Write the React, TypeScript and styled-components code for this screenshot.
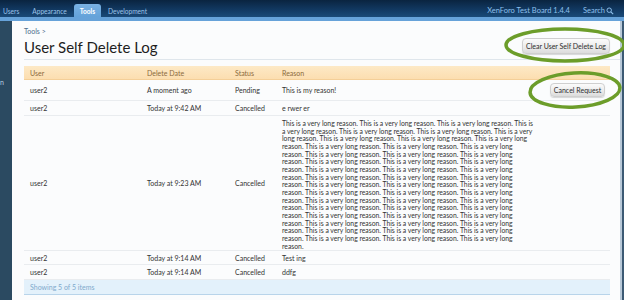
import React from "react";
import styled, { createGlobalStyle } from "styled-components";

const GlobalStyle = createGlobalStyle`
  html, body { margin: 0; padding: 0; background: #0d2a47; }
  body { font-family: Lato, "Open Sans", "DejaVu Sans", sans-serif; }
  * { box-sizing: border-box; }
`;

const Page = styled.div`
  position: relative;
  width: 624px;
  height: 300px;
  overflow: hidden;
  display: flex;
  flex-direction: column;
  background: #0d2a47;
`;

const TopBar = styled.div`
  height: 17px;
  display: flex;
  align-items: flex-end;
  justify-content: space-between;
  background: linear-gradient(180deg, #0a2440 0%, #123a63 60%, #1a4a78 100%);
  padding: 0 10px 0 0;
`;

const Tabs = styled.div`
  display: flex;
  align-items: flex-end;
  height: 100%;
`;

const Tab = styled.div<{ $active?: boolean; $first?: boolean }>`
  height: 13px;
  padding: ${(p) => (p.$first ? "0 6px 0 3px" : "0 6px")};
  margin-right: 1px;
  display: flex;
  align-items: center;
  font-size: 6.6px;
  color: ${(p) => (p.$active ? "#ffffff" : "#9cc4ea")};
  font-weight: ${(p) => (p.$active ? 700 : 400)};
  background: ${(p) => (p.$active ? "linear-gradient(180deg,#7ab2e4,#64a2d9)" : "transparent")};
  border-radius: ${(p) => (p.$active ? "3px 3px 0 0" : "0")};
`;

const RightLinks = styled.div`
  display: flex;
  align-items: center;
  gap: 13px;
  height: 13px;
  font-size: 7.5px;
  color: #8fc0ec;
`;

const SearchLink = styled.span`
  display: flex;
  align-items: center;
  gap: 1px;
`;

const Strip = styled.div`
  height: 4px;
  background: #66a2d9;
`;

const Body = styled.div`
  flex: 1;
  display: flex;
  min-height: 0;
`;

const Sidebar = styled.div`
  width: 12px;
  background: #2b4a61;
  padding-top: 57px;
  font-size: 7px;
  color: #b8cde0;
  overflow: hidden;
`;

const SideItem = styled.div`
  line-height: 8px;
`;

const Content = styled.div`
  flex: 1;
  background: #fbfcfd;
  border-right: 2px solid #b9c9d8;
  padding: 6px 10px 0 12px;
  display: flex;
  flex-direction: column;
`;

const Gutter = styled.div`
  width: 2px;
  background: #3c5a74;
`;

const Breadcrumb = styled.div`
  font-size: 7px;
  color: #4d6d8c;
  line-height: 9px;
`;

const TitleRow = styled.div`
  display: flex;
  align-items: flex-start;
  justify-content: space-between;
  border-bottom: 1px solid #dfe6ec;
  margin-right: -10px;
  padding-right: 10px;
  height: 24px;
`;

const Title = styled.h1`
  margin: 0;
  padding-top: 2px;
  font-size: 15px;
  line-height: 18px;
  font-weight: 400;
  color: #1e1e1e;
`;

const Button = styled.button<{ $h: number; $w: number; $mt?: number }>`
  height: ${(p) => p.$h}px;
  width: ${(p) => p.$w}px;
  margin-top: ${(p) => p.$mt ?? 0}px;
  padding: 0;
  font-family: inherit;
  font-size: 7px;
  color: #2e2e2e;
  background: linear-gradient(180deg, #fbfbfb 0%, #ececec 55%, #dcdcdc 100%);
  border: 1px solid #cfcfcf;
  border-radius: 4px;
  box-shadow: 0 1px 1px rgba(0, 0, 0, 0.15);
  white-space: nowrap;
`;

const Table = styled.div`
  margin-top: 6px;
  display: grid;
  grid-template-columns: 117px 88px 47px 1fr auto;
`;

const HeaderCell = styled.div`
  height: 14px;
  display: flex;
  align-items: center;
  padding-left: 6px;
  font-size: 7px;
  color: #8b6a3d;
  background: linear-gradient(180deg, #fde9c6, #fcdeb0);
  border-bottom: 1px solid #f4cf98;
`;

const Cell = styled.div<{ $h: number; $top?: boolean }>`
  min-height: ${(p) => p.$h}px;
  display: flex;
  align-items: ${(p) => (p.$top ? "flex-start" : "center")};
  padding: ${(p) => (p.$top ? "4px 0 0 6px" : "0 0 0 6px")};
  font-size: 7px;
  color: #333;
  border-bottom: 1px solid #e9ecef;
  white-space: nowrap;
`;

const ActionCell = styled(Cell)`
  justify-content: flex-end;
  padding-right: 5px;
`;

const ReasonLines = styled.div`
  font-size: 6.8px;
  line-height: 7.65px;
  color: #333;
`;

const Footer = styled.div`
  grid-column: 1 / -1;
  height: 15px;
  display: flex;
  align-items: center;
  padding-left: 6px;
  font-size: 7px;
  color: #7fa9cc;
  background: #e3f1fb;
  border-bottom: 1px solid #b8d4ea;
`;

const Overlay = styled.svg`
  position: absolute;
  left: 0;
  top: 0;
  pointer-events: none;
`;

const longLines = [
  "This is a very long reason. This is a very long reason. This is a very long reason. This is",
  "a very long reason. This is a very long reason. This is a very long reason. This is a very",
  "long reason. This is a very long reason. This is a very long reason. This is a very long",
  ...Array.from({ length: 13 }, () =>
    "reason. This is a very long reason. This is a very long reason. This is a very long"
  ),
  "reason.",
];

type Row = { date: string; status: string; reason: string; h: number; cancel?: boolean };

const rows: Row[] = [
  { date: "A moment ago", status: "Pending", reason: "This is my reason!", h: 21, cancel: true },
  { date: "Today at 9:42 AM", status: "Cancelled", reason: "e rwer er", h: 15 },
  { date: "Today at 9:23 AM", status: "Cancelled", reason: "__long__", h: 134 },
  { date: "Today at 9:14 AM", status: "Cancelled", reason: "Test ing", h: 14 },
  { date: "Today at 9:14 AM", status: "Cancelled", reason: "ddfg", h: 15 },
];

export default function App() {
  return (
    <Page>
      <GlobalStyle />
      <TopBar>
        <Tabs>
          <Tab $first>Users</Tab>
          <Tab>Appearance</Tab>
          <Tab $active>Tools</Tab>
          <Tab>Development</Tab>
        </Tabs>
        <RightLinks>
          <span>XenForo Test Board 1.4.4</span>
          <SearchLink>
            Search
            <svg width="8" height="8" viewBox="0 0 10 10">
              <circle cx="4" cy="4" r="2.8" fill="none" stroke="#8fc0ec" strokeWidth="1.2" />
              <line x1="6" y1="6" x2="9" y2="9" stroke="#8fc0ec" strokeWidth="1.4" />
            </svg>
          </SearchLink>
        </RightLinks>
      </TopBar>
      <Strip />
      <Body>
        <Sidebar>
          <SideItem>n</SideItem>
        </Sidebar>
        <Content>
          <Breadcrumb>Tools &gt;</Breadcrumb>
          <TitleRow>
            <Title>User Self Delete Log</Title>
            <Button $h={16} $w={88} $mt={2}>Clear User Self Delete Log</Button>
          </TitleRow>
          <Table>
            <HeaderCell>User</HeaderCell>
            <HeaderCell>Delete Date</HeaderCell>
            <HeaderCell>Status</HeaderCell>
            <HeaderCell>Reason</HeaderCell>
            <HeaderCell />
            {rows.map((r, i) => (
              <React.Fragment key={i}>
                <Cell $h={r.h}>user2</Cell>
                <Cell $h={r.h}>{r.date}</Cell>
                <Cell $h={r.h}>{r.status}</Cell>
                {r.reason === "__long__" ? (
                  <Cell $h={r.h} $top>
                    <ReasonLines>
                      {longLines.map((l, j) => (
                        <div key={j}>{l}</div>
                      ))}
                    </ReasonLines>
                  </Cell>
                ) : (
                  <Cell $h={r.h}>{r.reason}</Cell>
                )}
                <ActionCell $h={r.h}>
                  {r.cancel ? <Button $h={14} $w={55}>Cancel Request</Button> : null}
                </ActionCell>
              </React.Fragment>
            ))}
            <Footer>Showing 5 of 5 items</Footer>
          </Table>
        </Content>
        <Gutter />
      </Body>
      <Overlay width="624" height="300" viewBox="0 0 624 300">
        <ellipse cx="565" cy="45" rx="59" ry="16" fill="none" stroke="#6c9d2a" strokeWidth="3.5" />
        <ellipse cx="575" cy="90" rx="45" ry="17" fill="none" stroke="#6c9d2a" strokeWidth="3.5" transform="rotate(-3 575 90)" />
      </Overlay>
    </Page>
  );
}
